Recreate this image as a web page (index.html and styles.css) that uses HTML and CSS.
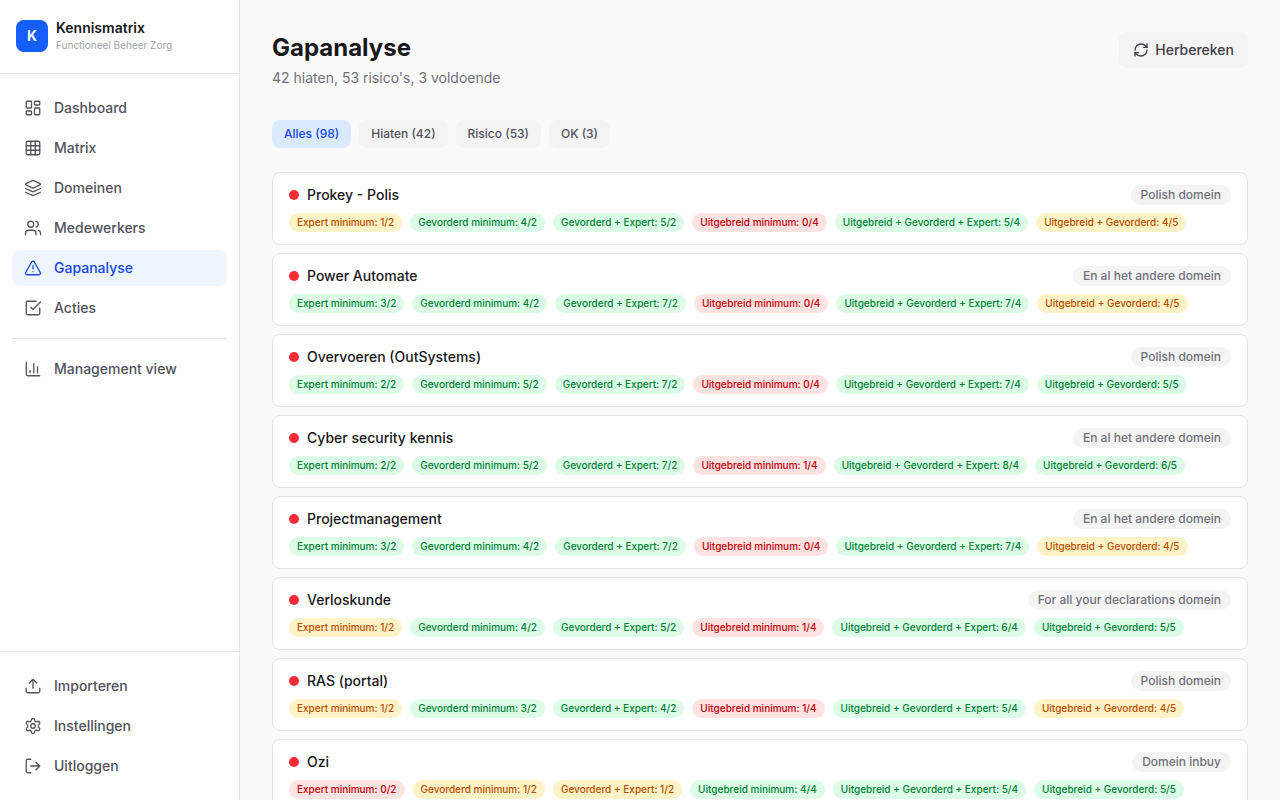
FILE: index.html
```html
<!DOCTYPE html>
<html lang="nl">
<head>
    <meta charset="UTF-8">
    <meta name="viewport" content="width=device-width, initial-scale=1.0">
    <title>Gapanalyse - Kennismatrix</title>
    <link rel="stylesheet" href="styles.css">
</head>
<body>
    <div class="app">
        <aside class="sidebar">
            <div class="merk">
                <div class="logo">K</div>
                <div>
                    <p class="merk-naam">Kennismatrix</p>
                    <p class="merk-sub">Functioneel Beheer Zorg</p>
                </div>
            </div>
            <nav class="menu">
                <a href="#"><svg viewBox="0 0 24 24"><rect width="7" height="9" x="3" y="3" rx="1"/><rect width="7" height="5" x="14" y="3" rx="1"/><rect width="7" height="9" x="14" y="12" rx="1"/><rect width="7" height="5" x="3" y="16" rx="1"/></svg>Dashboard</a>
                <a href="#"><svg viewBox="0 0 24 24"><rect width="18" height="18" x="3" y="3" rx="2"/><path d="M3 9h18M3 15h18M9 3v18M15 3v18"/></svg>Matrix</a>
                <a href="#"><svg viewBox="0 0 24 24"><path d="m12.83 2.18a2 2 0 0 0-1.66 0L2.6 6.08a1 1 0 0 0 0 1.83l8.58 3.91a2 2 0 0 0 1.66 0l8.58-3.9a1 1 0 0 0 0-1.83Z"/><path d="m22 17.65-9.17 4.16a2 2 0 0 1-1.66 0L2 17.65"/><path d="m22 12.65-9.17 4.16a2 2 0 0 1-1.66 0L2 12.65"/></svg>Domeinen</a>
                <a href="#"><svg viewBox="0 0 24 24"><path d="M16 21v-2a4 4 0 0 0-4-4H6a4 4 0 0 0-4 4v2"/><circle cx="9" cy="7" r="4"/><path d="M22 21v-2a4 4 0 0 0-3-3.87"/><path d="M16 3.13a4 4 0 0 1 0 7.75"/></svg>Medewerkers</a>
                <a href="#" class="actief"><svg viewBox="0 0 24 24"><path d="m21.73 18-8-14a2 2 0 0 0-3.48 0l-8 14A2 2 0 0 0 4 21h16a2 2 0 0 0 1.73-3"/><path d="M12 9v4M12 17h.01"/></svg>Gapanalyse</a>
                <a href="#"><svg viewBox="0 0 24 24"><path d="m9 11 3 3L22 4"/><path d="M21 12v7a2 2 0 0 1-2 2H5a2 2 0 0 1-2-2V5a2 2 0 0 1 2-2h11"/></svg>Acties</a>
                <hr>
                <a href="#"><svg viewBox="0 0 24 24"><path d="M3 3v16a2 2 0 0 0 2 2h16"/><path d="M18 17V9M13 17V5M8 17v-3"/></svg>Management view</a>
            </nav>
            <nav class="menu menu-onder">
                <a href="#"><svg viewBox="0 0 24 24"><path d="M21 15v4a2 2 0 0 1-2 2H5a2 2 0 0 1-2-2v-4"/><path d="m17 8-5-5-5 5M12 3v12"/></svg>Importeren</a>
                <a href="#"><svg viewBox="0 0 24 24"><path d="M12.22 2h-.44a2 2 0 0 0-2 2v.18a2 2 0 0 1-1 1.73l-.43.25a2 2 0 0 1-2 0l-.15-.08a2 2 0 0 0-2.73.73l-.22.38a2 2 0 0 0 .73 2.73l.15.1a2 2 0 0 1 1 1.72v.51a2 2 0 0 1-1 1.74l-.15.09a2 2 0 0 0-.73 2.73l.22.38a2 2 0 0 0 2.73.73l.15-.08a2 2 0 0 1 2 0l.43.25a2 2 0 0 1 1 1.73V20a2 2 0 0 0 2 2h.44a2 2 0 0 0 2-2v-.18a2 2 0 0 1 1-1.73l.43-.25a2 2 0 0 1 2 0l.15.08a2 2 0 0 0 2.73-.73l.22-.39a2 2 0 0 0-.73-2.73l-.15-.08a2 2 0 0 1-1-1.74v-.5a2 2 0 0 1 1-1.74l.15-.09a2 2 0 0 0 .73-2.73l-.22-.38a2 2 0 0 0-2.73-.73l-.15.08a2 2 0 0 1-2 0l-.43-.25a2 2 0 0 1-1-1.73V4a2 2 0 0 0-2-2z"/><circle cx="12" cy="12" r="3"/></svg>Instellingen</a>
                <a href="#"><svg viewBox="0 0 24 24"><path d="M9 21H5a2 2 0 0 1-2-2V5a2 2 0 0 1 2-2h4"/><path d="m16 17 5-5-5-5M21 12H9"/></svg>Uitloggen</a>
            </nav>
        </aside>

        <main class="inhoud">
            <header class="kop">
                <div>
                    <h1>Gapanalyse</h1>
                    <p>42 hiaten, 53 risico's, 3 voldoende</p>
                </div>
                <button type="button" class="knop"><svg viewBox="0 0 24 24"><path d="M3 12a9 9 0 0 1 9-9 9.75 9.75 0 0 1 6.74 2.74L21 8"/><path d="M21 3v5h-5"/><path d="M21 12a9 9 0 0 1-9 9 9.75 9.75 0 0 1-6.74-2.74L3 16"/><path d="M8 16H3v5"/></svg>Herbereken</button>
            </header>

            <div class="filters">
                <button type="button" class="actief">Alles (98)</button>
                <button type="button">Hiaten (42)</button>
                <button type="button">Risico (53)</button>
                <button type="button">OK (3)</button>
            </div>

            <div class="lijst">
                <article class="kaart">
                    <div class="kaart-kop"><span class="stip"></span><h2>Prokey - Polis</h2><span class="domein">Polish domein</span></div>
                    <ul class="regels">
                        <li class="risico">Expert minimum: 1/2</li>
                        <li class="ok">Gevorderd minimum: 4/2</li>
                        <li class="ok">Gevorderd + Expert: 5/2</li>
                        <li class="hiaat">Uitgebreid minimum: 0/4</li>
                        <li class="ok">Uitgebreid + Gevorderd + Expert: 5/4</li>
                        <li class="risico">Uitgebreid + Gevorderd: 4/5</li>
                    </ul>
                </article>
                <article class="kaart">
                    <div class="kaart-kop"><span class="stip"></span><h2>Power Automate</h2><span class="domein">En al het andere domein</span></div>
                    <ul class="regels">
                        <li class="ok">Expert minimum: 3/2</li>
                        <li class="ok">Gevorderd minimum: 4/2</li>
                        <li class="ok">Gevorderd + Expert: 7/2</li>
                        <li class="hiaat">Uitgebreid minimum: 0/4</li>
                        <li class="ok">Uitgebreid + Gevorderd + Expert: 7/4</li>
                        <li class="risico">Uitgebreid + Gevorderd: 4/5</li>
                    </ul>
                </article>
                <article class="kaart">
                    <div class="kaart-kop"><span class="stip"></span><h2>Overvoeren (OutSystems)</h2><span class="domein">Polish domein</span></div>
                    <ul class="regels">
                        <li class="ok">Expert minimum: 2/2</li>
                        <li class="ok">Gevorderd minimum: 5/2</li>
                        <li class="ok">Gevorderd + Expert: 7/2</li>
                        <li class="hiaat">Uitgebreid minimum: 0/4</li>
                        <li class="ok">Uitgebreid + Gevorderd + Expert: 7/4</li>
                        <li class="ok">Uitgebreid + Gevorderd: 5/5</li>
                    </ul>
                </article>
                <article class="kaart">
                    <div class="kaart-kop"><span class="stip"></span><h2>Cyber security kennis</h2><span class="domein">En al het andere domein</span></div>
                    <ul class="regels">
                        <li class="ok">Expert minimum: 2/2</li>
                        <li class="ok">Gevorderd minimum: 5/2</li>
                        <li class="ok">Gevorderd + Expert: 7/2</li>
                        <li class="hiaat">Uitgebreid minimum: 1/4</li>
                        <li class="ok">Uitgebreid + Gevorderd + Expert: 8/4</li>
                        <li class="ok">Uitgebreid + Gevorderd: 6/5</li>
                    </ul>
                </article>
                <article class="kaart">
                    <div class="kaart-kop"><span class="stip"></span><h2>Projectmanagement</h2><span class="domein">En al het andere domein</span></div>
                    <ul class="regels">
                        <li class="ok">Expert minimum: 3/2</li>
                        <li class="ok">Gevorderd minimum: 4/2</li>
                        <li class="ok">Gevorderd + Expert: 7/2</li>
                        <li class="hiaat">Uitgebreid minimum: 0/4</li>
                        <li class="ok">Uitgebreid + Gevorderd + Expert: 7/4</li>
                        <li class="risico">Uitgebreid + Gevorderd: 4/5</li>
                    </ul>
                </article>
                <article class="kaart">
                    <div class="kaart-kop"><span class="stip"></span><h2>Verloskunde</h2><span class="domein">For all your declarations domein</span></div>
                    <ul class="regels">
                        <li class="risico">Expert minimum: 1/2</li>
                        <li class="ok">Gevorderd minimum: 4/2</li>
                        <li class="ok">Gevorderd + Expert: 5/2</li>
                        <li class="hiaat">Uitgebreid minimum: 1/4</li>
                        <li class="ok">Uitgebreid + Gevorderd + Expert: 6/4</li>
                        <li class="ok">Uitgebreid + Gevorderd: 5/5</li>
                    </ul>
                </article>
                <article class="kaart">
                    <div class="kaart-kop"><span class="stip"></span><h2>RAS (portal)</h2><span class="domein">Polish domein</span></div>
                    <ul class="regels">
                        <li class="risico">Expert minimum: 1/2</li>
                        <li class="ok">Gevorderd minimum: 3/2</li>
                        <li class="ok">Gevorderd + Expert: 4/2</li>
                        <li class="hiaat">Uitgebreid minimum: 1/4</li>
                        <li class="ok">Uitgebreid + Gevorderd + Expert: 5/4</li>
                        <li class="risico">Uitgebreid + Gevorderd: 4/5</li>
                    </ul>
                </article>
                <article class="kaart">
                    <div class="kaart-kop"><span class="stip"></span><h2>Ozi</h2><span class="domein">Domein inbuy</span></div>
                    <ul class="regels">
                        <li class="hiaat">Expert minimum: 0/2</li>
                        <li class="risico">Gevorderd minimum: 1/2</li>
                        <li class="risico">Gevorderd + Expert: 1/2</li>
                        <li class="ok">Uitgebreid minimum: 4/4</li>
                        <li class="ok">Uitgebreid + Gevorderd + Expert: 5/4</li>
                        <li class="ok">Uitgebreid + Gevorderd: 5/5</li>
                    </ul>
                </article>
            </div>
        </main>
    </div>
</body>
</html>
```

FILE: styles.css
```css
*{
    margin: 0;
    padding: 0;
    box-sizing: border-box;
}
body{
    font-family: Inter, "Liberation Sans", sans-serif;
    font-size: 14px;
    line-height: 20px;
    color: #18181b;
    background-color: #fafafa;
}
button{
    font: inherit;
    border: none;
    cursor: pointer;
}
svg{
    flex-shrink: 0;
    fill: none;
    stroke: currentColor;
    stroke-width: 2;
    stroke-linecap: round;
    stroke-linejoin: round;
}
.app{
    display: flex;
    height: 100vh;
}

/* zijbalk */
.sidebar{
    display: flex;
    flex-direction: column;
    flex-shrink: 0;
    width: 240px;
    background-color: #fff;
    border-right: 1px solid #e4e4e7;
}
.merk{
    display: flex;
    align-items: center;
    gap: 8px;
    padding: 18px 16px 20px;
    border-bottom: 1px solid #e4e4e7;
}
.logo{
    width: 32px;
    height: 32px;
    border-radius: 8px;
    background-color: #155dfc;
    color: #fff;
    font-weight: 700;
    line-height: 32px;
    text-align: center;
}
.merk-naam{
    font-weight: 600;
}
.merk-sub{
    font-size: 10px;
    line-height: 15px;
    color: #9f9fa9;
}
.menu{
    display: flex;
    flex-direction: column;
    flex: 1;
    gap: 4px;
    padding: 16px 12px;
}
.menu a{
    display: flex;
    align-items: center;
    gap: 12px;
    padding: 8px 12px;
    border-radius: 8px;
    color: #52525c;
    font-weight: 500;
    text-decoration: none;
}
.menu a.actief{
    background-color: #eff6ff;
    color: #1447e6;
}
.menu svg{
    width: 18px;
    height: 18px;
    stroke-width: 1.75;
}
.menu hr{
    border: none;
    border-top: 1px solid #e4e4e7;
    margin: 8px 0;
}
.menu-onder{
    flex: none;
    border-top: 1px solid #e4e4e7;
}

/* inhoud */
.inhoud{
    flex: 1;
    min-width: 0;
    padding: 32px;
    overflow-y: auto;
}
.kop{
    display: flex;
    justify-content: space-between;
    align-items: flex-start;
    margin-bottom: 32px;
}
.kop h1{
    font-size: 24px;
    line-height: 32px;
    font-weight: 700;
}
.kop p{
    margin-top: 4px;
    color: #71717b;
}
.knop{
    display: flex;
    align-items: center;
    gap: 6px;
    padding: 8px 14px;
    border-radius: 8px;
    background-color: #f4f4f5;
    color: #3f3f46;
    font-weight: 500;
}
.knop svg{
    width: 16px;
    height: 16px;
}
.filters{
    display: flex;
    gap: 8px;
    margin-bottom: 24px;
}
.filters button{
    padding: 6px 12px;
    border-radius: 8px;
    background-color: #f4f4f5;
    color: #52525c;
    font-size: 12px;
    line-height: 16px;
    font-weight: 500;
}
.filters .actief{
    background-color: #dbeafe;
    color: #1447e6;
}
.lijst{
    display: flex;
    flex-direction: column;
    gap: 8px;
}
.kaart{
    padding: 12px 16px;
    border: 1px solid #e4e4e7;
    border-radius: 8px;
    background-color: #fff;
}
.kaart-kop{
    display: flex;
    align-items: center;
    gap: 8px;
    margin-bottom: 8px;
}
.kaart-kop h2{
    font-size: 14px;
    font-weight: 500;
}
.stip{
    width: 10px;
    height: 10px;
    border-radius: 50%;
    background-color: #fb2c36;
}
.domein{
    margin-left: auto;
    padding: 2px 10px;
    border-radius: 10px;
    background-color: #f4f4f5;
    color: #71717b;
    font-size: 12px;
    line-height: 16px;
    font-weight: 500;
}
.regels{
    display: flex;
    flex-wrap: wrap;
    gap: 8px;
    list-style: none;
}
.regels li{
    padding: 2px 8px;
    border-radius: 10px;
    font-size: 10px;
    line-height: 15px;
    font-weight: 500;
}
.ok{
    background-color: #dcfce7;
    color: #008236;
}
.risico{
    background-color: #fef3c6;
    color: #bb4d00;
}
.hiaat{
    background-color: #ffe2e2;
    color: #c10007;
}
```
